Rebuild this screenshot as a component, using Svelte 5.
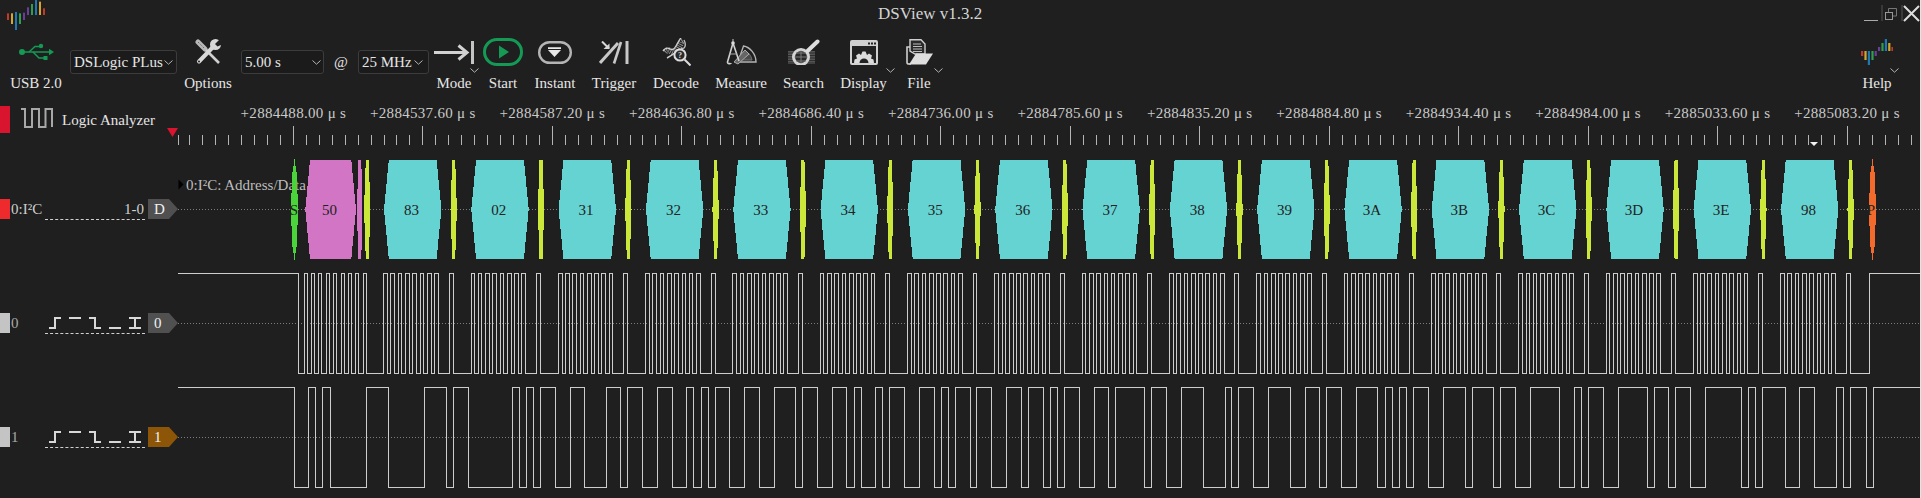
<script>
  const X0 = 178;
  const T = 7.276;
  const BYTE = 87.31;
  const R0 = 383.7;
  const bytes = [0x83,0x02,0x31,0x32,0x33,0x34,0x35,0x36,0x37,0x38,0x39,0x3a,0x3b,0x3c,0x3d,0x3e,0x98];

  function buildWaves() {
    const scl = [];
    const sda = [294];
    let level = 0;
    const setSda = (x, v) => { if (v !== level) { sda.push(x); level = v; } };
    scl.push(298);
    const addrBits = [0,1,0,1,0,0,0,0,0];
    addrBits.forEach((b, i) => {
      const rise = Math.floor(304.2 + i * 7.36);
      const fall = Math.floor(rise + 3.9);
      scl.push(rise, fall);
      if (i < 8 && addrBits[i + 1] !== b) setSda(fall + 1, addrBits[i + 1]);
      if (i === 8) setSda(fall, 1);
    });
    bytes.forEach((val, k) => {
      const R = R0 + k * BYTE;
      const bits = [];
      for (let j = 7; j >= 0; j--) bits.push((val >> j) & 1);
      if (bits[0] === 0) setSda(Math.floor(R - 3), 0);
      let lastFall = 0;
      bits.forEach((b, j) => {
        const rise = Math.floor(R + j * T);
        const fall = Math.floor(R + j * T + 3.7);
        scl.push(rise, fall);
        lastFall = fall;
        if (j < 7 && bits[j + 1] !== b) setSda(fall + 1, bits[j + 1]);
      });
      const r9 = Math.floor(R + 9 * T);
      const f9 = Math.floor(R + 9 * T + 3.9);
      if (level === 0) setSda(lastFall + 1, 1);
      setSda(r9 - 3, 0);
      scl.push(r9, f9);
      setSda(f9, 1);
    });
    setSda(1866, 0);
    scl.push(1869);
    setSda(1873, 1);
    return { scl, sda };
  }

  function wavePath(edges, hi, lo) {
    let y = hi;
    let d = `M0 ${hi}`;
    for (const e of edges) {
      const x = e - X0 + 0.5;
      y = y === hi ? lo : hi;
      d += ` H${x} V${y}`;
    }
    return d + ` H1742`;
  }

  const { scl, sda } = buildWaves();
  const HI = 7.5, LO = 107.5;
  const sclPath = wavePath(scl, HI, LO);
  const sdaPath = wavePath(sda, HI, LO);

  const TOP = 8, BOT = 107, MID = 57.5;
  const hex = (l, r, d) => `${l + d},${TOP} ${r - d},${TOP} ${r},${MID} ${r - d},${BOT} ${l + d},${BOT} ${l},${MID}`;
  const lens = (c, w) => `${c},${TOP - 1} ${c + w * 0.75},${TOP + 16} ${c + w},${MID} ${c + w * 0.75},${BOT - 16} ${c},${BOT + 1} ${c - w * 0.75},${BOT - 16} ${c - w},${MID} ${c - w * 0.75},${TOP + 16}`;

  const acks = [hex(364 - X0, 370.5 - X0, 1.8)];
  const blocks = bytes.map((v, k) => {
    const cx = R0 + k * BYTE + 29 - X0;
    acks.push(hex(cx + 37.8, cx + 44.2, 1.7));
    return {
      label: v.toString(16).toUpperCase().padStart(2, '0'),
      points: hex(cx - 28.7, cx + 28.7, 4.8),
      tx: cx - 1.2
    };
  });

  const labels = ['2884488.00','2884537.60','2884587.20','2884636.80','2884686.40','2884736.00','2884785.60','2884835.20','2884884.80','2884934.40','2884984.00','2885033.60','2885083.20'];
  const RX = 160;
  const majors = labels.map((t, i) => ({ t: `+${t} μ s`, x: 293.4 + i * 129.47 - RX }));
  const tickList = [{ x: 178.5 - RX, major: false }];
  for (let n = -8; n <= 125; n++) {
    const x = Math.floor(293.4 + n * 12.947) + 0.5 - RX;
    if (x + RX < 1920) tickList.push({ x, major: n % 10 === 0 });
  }

  const logoBars = [
    [0,40,60,'#c0392b'],[4,40,72,'#d4a72c'],[8,36,90,'#1f78b4'],[12,40,72,'#2e9e4f'],[16,38,60,'#6a3d9a'],
    [20,22,45,'#6a3d9a'],[24,12,45,'#2e9e4f'],[28,0,45,'#1f78b4'],[32,5,45,'#d4a72c'],[36,25,45,'#c0392b']
  ];
  const helpBars = [
    [0,12,17,'#c0392b'],[3.4,12,21,'#d4a72c'],[6.8,12,26,'#1f78b4'],[10.4,12,21,'#2e9e4f'],[13.6,12,17,'#6a3d9a'],
    [17,8,12,'#6a3d9a'],[20.4,4,12,'#2e9e4f'],[23.8,0,12,'#1f78b4'],[27.2,4,12,'#d4a72c'],[30.4,8,12,'#c0392b']
  ];
</script>

{#snippet chev()}
  <svg class="chev" width="9" height="5" viewBox="0 0 9 5"><path d="M0.5 0.5 L4.5 4.2 L8.5 0.5" fill="none" stroke="#b5b5b5"/></svg>
{/snippet}

{#snippet trig()}
  <div class="trigs">
    <svg width="12" height="12" viewBox="0 0 12 12"><path d="M0 11H6V1H12" class="tg"/></svg>
    <svg width="12" height="12" viewBox="0 0 12 12"><path d="M0 1H12" class="tg"/></svg>
    <svg width="12" height="12" viewBox="0 0 12 12"><path d="M0 1H6V11H12" class="tg"/></svg>
    <svg width="12" height="12" viewBox="0 0 12 12"><path d="M0 11H12" class="tg"/></svg>
    <svg width="12" height="12" viewBox="0 0 12 12"><path d="M0 1H12M0 11H12M6 1V11" class="tg"/></svg>
  </div>
{/snippet}

<div class="app">
  <header class="titlebar">
    <svg class="logo" width="40" height="30" viewBox="0 0 40 30">
      {#each logoBars as b}
        <rect x={b[0]} y={b[1] / 3} width="2" height={(b[2] - b[1]) / 3} fill={b[3]} />
      {/each}
    </svg>
    <div class="title">DSView v1.3.2</div>
    <svg class="winctl" width="56" height="24" viewBox="0 0 56 24">
      <path d="M0 17.5H14" stroke="#aaa" fill="none"/>
      <path d="M18 2V18M38 2V18" stroke="#555" fill="none"/>
      <rect x="21.5" y="9.5" width="7" height="7" fill="#202020" stroke="#999"/>
      <path d="M24.5 9V5.5H32.5V13H29" stroke="#777" fill="none"/>
      <path d="M40 3L55 18M55 3L40 18" stroke="#ddd" stroke-width="2" fill="none"/>
    </svg>
  </header>

  <div class="toolbar">
    <div class="tool usb">
      <div class="icon">
        <svg width="36" height="18" viewBox="0 0 36 18">
          <g fill="#149a55" stroke="#149a55">
            <circle cx="4" cy="9" r="3" stroke="none"/>
            <path d="M4 9H32" fill="none" stroke-width="1.5"/>
            <path d="M31 5.8L36 9L31 12.2Z" stroke="none"/>
            <path d="M11 9L17 3.5H22M15 9L21 15H26" fill="none" stroke-width="1.5"/>
            <circle cx="23" cy="3" r="2.2" stroke="none"/>
            <rect x="25.5" y="13" width="4" height="4" stroke="none"/>
          </g>
        </svg>
      </div>
      <span class="lbl">USB 2.0</span>
    </div>
    <div class="combo device"><span>DSLogic PLus</span>{@render chev()}</div>
    <div class="tool options">
      <div class="icon">
        <svg width="27" height="26" viewBox="0 0 27 26">
          <path d="M3 3L10 10" stroke="#b8b8b8" stroke-width="5" fill="none" stroke-linecap="round"/>
          <path d="M3 3L10 10" stroke="#555" stroke-width="1" stroke-dasharray="1 1.5" fill="none"/>
          <path d="M11 11L24 24" stroke="#cfcfcf" stroke-width="2.6" fill="none"/>
          <path d="M4 22.5L18 8" stroke="#d8d8d8" stroke-width="4" fill="none" stroke-linecap="round"/>
          <circle cx="20.5" cy="5.5" r="5.5" fill="#d8d8d8"/>
          <path d="M20 5L25 0H27V5.5L22.5 7.5Z" fill="#202020"/>
          <circle cx="4" cy="22.5" r="1" fill="#202020"/>
        </svg>
      </div>
      <span class="lbl">Options</span>
    </div>
    <div class="combo dur"><span>5.00 s</span>{@render chev()}</div>
    <div class="at">@</div>
    <div class="combo rate"><span>25 MHz</span>{@render chev()}</div>

    <div class="tool mode">
      <div class="icon">
        <svg width="41" height="23" viewBox="0 0 41 23">
          <path d="M0 11.5H33M24.5 4.5L33 11.5L24.5 18.5" stroke="#d2d2d2" stroke-width="3" fill="none"/>
          <path d="M38.5 0V23" stroke="#c4c4c4" stroke-width="3" fill="none"/>
        </svg>
      </div>
      <span class="lbl">Mode</span>{@render chev()}
    </div>
    <div class="tool start">
      <div class="icon">
        <svg width="40" height="28" viewBox="0 0 40 28">
          <rect x="1.5" y="1.5" width="37" height="25" rx="12.5" fill="none" stroke="#149a55" stroke-width="3"/>
          <path d="M16 7.5L26 14L16 20.5Z" fill="#149a55"/>
        </svg>
      </div>
      <span class="lbl">Start</span>
    </div>
    <div class="tool instant">
      <div class="icon">
        <svg width="34" height="23" viewBox="0 0 34 23">
          <rect x="1.2" y="1.2" width="31.6" height="20.6" rx="10.3" fill="none" stroke="#b4b4b4" stroke-width="2.4"/>
          <path d="M10 6.2H23V8H10ZM10 9L23 9L16.5 16Z" fill="#e8e8e8"/>
        </svg>
      </div>
      <span class="lbl">Instant</span>
    </div>
    <div class="tool trigger">
      <div class="icon">
        <svg width="30" height="23" viewBox="0 0 30 23">
          <path d="M1 22L19 2" stroke="#c8c8c8" stroke-width="3" fill="none"/>
          <path d="M15 22.5L22 1" stroke="#c8c8c8" stroke-width="2.6" fill="none"/>
          <path d="M28 0V23" stroke="#c8c8c8" stroke-width="3" fill="none"/>
          <path d="M3 0.5L10 7.5" stroke="#d8d8d8" stroke-width="2" fill="none"/>
          <path d="M10.5 2.5V8H4.5Z" fill="#d8d8d8"/>
        </svg>
      </div>
      <span class="lbl">Trigger</span>
    </div>
    <div class="tool decode">
      <div class="icon">
        <svg width="29" height="28" viewBox="0 0 29 28">
          <path d="M3 14C8 8 11 20 16 11S18 5 21 3" stroke="#8e8e8e" stroke-width="6" stroke-dasharray="1 1" fill="none"/>
          <path d="M1 13C7 5 9 17 14 8S18 1 19 0M5 20C11 17 14 14 17 11" stroke="#cfcfcf" stroke-width="1.4" fill="none"/>
          <path d="M22 2C25 8 22 12 19 10" stroke="#bbb" stroke-width="1.4" fill="none"/>
          <circle cx="18" cy="17" r="5.6" fill="#2a2a2a" stroke="#dcdcdc" stroke-width="2"/>
          <path d="M22.5 21.5L28.5 27.5" stroke="#dcdcdc" stroke-width="2" fill="none"/>
          <text x="18" y="20" class="q">?</text>
        </svg>
      </div>
      <span class="lbl">Decode</span>
    </div>
    <div class="tool measure">
      <div class="icon">
        <svg width="31" height="26" viewBox="0 0 31 26">
          <path d="M12 23L30 23C30 15 24 8 17.5 7Z" fill="none" stroke="#b4b4b4" stroke-width="1.4"/>
          <path d="M15 21L26 21C25 16 22 13 19 12Z" fill="#4a4a4a" stroke="#777"/>
          <path d="M8 23L19 11L23 15L12 25Z" fill="#666" stroke="#aaa"/>
          <path d="M7 4L1.5 23C1 25 5 25 5 24M7 4L13 22" stroke="#d0d0d0" stroke-width="1.6" fill="none"/>
          <path d="M3.5 15H11" stroke="#aaa" fill="none"/>
          <circle cx="7" cy="4" r="1.8" fill="#ddd"/>
          <path d="M7 0V3" stroke="#ccc" fill="none"/>
        </svg>
      </div>
      <span class="lbl">Measure</span>
    </div>
    <div class="tool search">
      <div class="icon">
        <svg width="32" height="26" viewBox="0 0 32 26">
          <rect x="0" y="12" width="27" height="13" fill="#555"/>
          <path d="M0 14H27M0 16.5H27M0 19H27M0 21.5H27M0 24H27" stroke="#2e2e2e" fill="none"/>
          <circle cx="13" cy="18" r="7.5" fill="#2a2a2a" stroke="#d4d4d4" stroke-width="3"/>
          <path d="M6.5 18H19.5M13 11.5V24.5M8 14H18M8 22H18" stroke="#7a7a7a" fill="none"/>
          <path d="M19.5 12L29.5 2.5" stroke="#dedede" stroke-width="4" stroke-linecap="round" fill="none"/>
        </svg>
      </div>
      <span class="lbl">Search</span>
    </div>
    <div class="tool display">
      <div class="icon">
        <svg width="28" height="25" viewBox="0 0 28 25">
          <rect x="1" y="1" width="26" height="23" rx="1" fill="#222" stroke="#d0d0d0" stroke-width="2"/>
          <rect x="1" y="1" width="26" height="5" fill="#d0d0d0"/>
          <path d="M18 2.5h2v2h-2zM21 2.5h2v2h-2zM24 2.5h2v2h-2z" fill="#222"/>
          <path d="M4 23L4.5 19.5L7 18.5L6 15.5L9 13.5L11 15L12.5 11.5H15.5L17 15L19 13.5L22 15.5L21 18.5L23.5 19.5L24 23H18.5A4.5 4.5 0 0 0 9.500 23Z" fill="#dcdcdc"/>
        </svg>
      </div>
      <span class="lbl">Display</span>{@render chev()}
    </div>
    <div class="tool file">
      <div class="icon">
        <svg width="27" height="26" viewBox="0 0 27 26">
          <path d="M4 12V0.800H15L19 5V15H9Z" fill="#2a2a2a" stroke="#cfcfcf" stroke-width="1.4"/>
          <path d="M7 5H15M7 7.500H16M7 10H16M7 12.500H16" stroke="#bdbdbd" fill="none"/>
          <path d="M4 8H1V23.500C1 24.500 2 25 3 25H5" stroke="#cfcfcf" stroke-width="1.6" fill="none"/>
          <path d="M10 14.500H27L20 25.500H3Z" fill="#dedede"/>
        </svg>
      </div>
      <span class="lbl">File</span>{@render chev()}
    </div>

    <div class="tool help">
      <div class="icon">
        <svg width="32" height="26" viewBox="0 0 32 26">
          {#each helpBars as b}
            <rect x={b[0]} y={b[1]} width="2.2" height={b[2] - b[1]} fill={b[3]} />
          {/each}
        </svg>
      </div>
      <span class="lbl">Help</span>{@render chev()}
    </div>
  </div>

  <div class="rulerrow">
    <div class="la">
      <div class="swatch red"></div>
      <svg class="laicon" width="33" height="20" viewBox="0 0 33 20">
        <path d="M1 1H5V19H12V1H19V19H25.500V1H32V19" fill="none" stroke="#a8a8a8" stroke-width="2"/>
      </svg>
      <span class="la-text">Logic Analyzer</span>
    </div>
    <svg class="ruler" width="1760" height="52" viewBox="0 0 1760 52">
      {#each majors as m}
        <text x={m.x} y="18" class="rlabel">{m.t}</text>
      {/each}
      {#each tickList as t}
        <path d="M{t.x} {t.major ? 26 : 35}V45" class="tick"/>
      {/each}
      <path d="M7 28H18L12.500 37Z" fill="#d8142e"/>
      <path d="M1650 42H1658L1654 46Z" fill="#f2f2f2"/>
    </svg>
  </div>

  <div class="row">
    <div class="thead">
      <div class="swatch bright"></div>
      <span class="name">0:I²C</span>
      <div class="ctrl right"><span>1-0</span></div>
      <div class="tag"><span>D</span></div>
    </div>
    <svg class="canvas" width="1742" height="114" viewBox="0 0 1742 114">
      <path d="M0 57.500H1742" class="mid"/>
      <text x="8" y="38" class="ann">0:I²C: Address/Data</text>
      <path d="M0.500 27.500L5.500 32.500L0.500 37.500Z" fill="#000"/>
      <g class="crisp">
        <polygon points={lens(116.5, 3.4)} fill="#4bd33b"/>
        <polygon points={hex(305.3 - X0, 356 - X0, 4.7)} fill="#d175c4"/>
        <polygon points={hex(357 - X0, 362.5 - X0, 1.2)} fill="#d175c4"/>
        {#each blocks as b}
          <polygon points={b.points} fill="#66d3d3"/>
        {/each}
        {#each acks as a}
          <polygon points={a} fill="#cbe83a"/>
        {/each}
        <polygon points={lens(1872.5 - X0, 3.4)} fill="#f26a2c"/>
      </g>
      <text x="116" y="62.500" class="dt">S</text>
      <text x="151.500" y="62.500" class="dt">50</text>
      {#each blocks as b}
        <text x={b.tx} y="62.500" class="dt">{b.label}</text>
      {/each}
      <text x={1871 - X0} y="62.500" class="dt">P</text>
    </svg>
  </div>

  <div class="row">
    <div class="thead">
      <div class="swatch grey"></div>
      <span class="name dim">0</span>
      <div class="ctrl">{@render trig()}</div>
      <div class="tag"><span>0</span></div>
    </div>
    <svg class="canvas" width="1742" height="114" viewBox="0 0 1742 114">
      <path d="M0 57.500H1742" class="mid"/>
      <path d={sclPath} class="wave"/>
    </svg>
  </div>

  <div class="row">
    <div class="thead">
      <div class="swatch grey"></div>
      <span class="name dim">1</span>
      <div class="ctrl">{@render trig()}</div>
      <div class="tag brown"><span>1</span></div>
    </div>
    <svg class="canvas" width="1742" height="114" viewBox="0 0 1742 114">
      <path d="M0 57.500H1742" class="mid"/>
      <path d={sdaPath} class="wave"/>
    </svg>
  </div>
</div>

<style>
  :global(body) { margin: 0; background: #1f1f1f; }
  .app {
    width: 1920px;
    height: 498px;
    border-right: 1px solid #e4e4e4;
    background: #1f1f1f;
    color: #e6e6e6;
    font: 15px/18px "Liberation Serif", serif;
    overflow: hidden;
  }
  svg { display: block; flex: none; }

  .titlebar { height: 30px; display: flex; padding-left: 7px; }
  .title { margin-left: 831px; font-size: 17px; line-height: 27px; color: #d4d4d4; }
  .winctl { margin-left: auto; margin-top: 3px; }

  .toolbar { height: 70px; display: flex; padding-right: 21px; }
  .tool {
    position: relative;
    height: 62px;
    flex: none;
    display: flex;
    flex-direction: column;
    align-items: center;
  }
  .icon { height: 44px; display: flex; align-items: center; justify-content: center; }
  .lbl { white-space: nowrap; }
  .tool > :global(.chev) { position: absolute; right: 0; top: 38px; }

  .usb { width: 70px; padding-left: 2px; box-sizing: border-box; }
  .options { width: 62px; }
  .mode { width: 50px; }
  .start { width: 48px; }
  .instant { width: 56px; }
  .trigger { width: 62px; }
  .decode { width: 62px; }
  .measure { width: 68px; }
  .search { width: 57px; }
  .display { width: 63px; }
  .file { width: 48px; }
  .help { width: 44px; margin-left: auto; }

  .combo {
    box-sizing: border-box;
    height: 24px;
    margin-top: 20px;
    flex: none;
    display: flex;
    align-items: center;
    justify-content: space-between;
    padding: 0 3px;
    border: 1px solid #3c3c3c;
    border-radius: 3px;
    background: #1b1b1b;
    white-space: nowrap;
  }
  .device { width: 107px; }
  .dur { width: 83px; margin-left: 2px; padding-right: 0; }
  .dur :global(.chev), .rate :global(.chev) { margin-right: 2px; }
  .rate { width: 71px; }
  .at { width: 34px; margin-top: 20px; line-height: 24px; text-align: center; flex: none; }

  .rulerrow { height: 52px; display: flex; }
  .la { width: 160px; flex: none; display: flex; align-items: flex-start; padding-top: 6px; box-sizing: border-box; }
  .laicon { margin: 2px 0 0 10px; }
  .la-text { margin-left: 9px; line-height: 28px; white-space: nowrap; }
  .swatch { width: 10px; flex: none; height: 20px; }
  .la .swatch { height: 27px; }
  .red { background: #d8142e; }
  .bright { background: #ee2a2c; }
  .grey { background: #c4c4c4; }
  .rlabel { font-size: 15px; letter-spacing: 0.3px; fill: #cacaca; text-anchor: middle; }
  .tick { stroke: #b4b4b4; fill: none; }

  .row { height: 114px; display: flex; }
  .thead { width: 178px; flex: none; display: flex; align-items: center; }
  .name { width: 35px; flex: none; padding-left: 1px; box-sizing: border-box; white-space: nowrap; color: #cfcfcf; }
  .name.dim { color: #aaa; }
  .ctrl {
    box-sizing: border-box;
    width: 100px;
    height: 21px;
    margin-top: 1px;
    flex: none;
    border-bottom: 1px dashed #d0d0d0;
    display: flex;
    align-items: center;
    color: #cfcfcf;
  }
  .ctrl.right { justify-content: flex-end; padding-right: 1px; }
  .trigs { display: flex; gap: 8px; padding-left: 4px; }
  .tg { fill: none; stroke: #d8d8d8; stroke-width: 2; }
  .tag {
    width: 30px;
    height: 20px;
    margin-left: 3px;
    flex: none;
    background: #505050;
    clip-path: polygon(0 0, 21px 0, 100% 50%, 21px 100%, 0 100%);
    color: #f0f0f0;
    line-height: 20px;
    box-sizing: border-box;
    padding-left: 6px;
  }
  .tag.brown { background: #8c5508; }

  .mid { stroke: #7c7c7c; stroke-dasharray: 1 2; fill: none; }
  .wave { fill: none; stroke: #cdcdcd; stroke-width: 1; shape-rendering: crispEdges; }
  .crisp { shape-rendering: crispEdges; }
  .ann { font-size: 15px; fill: #bdbdbd; }
  .dt { font-size: 15px; fill: #222; text-anchor: middle; }
  .q { font-size: 8px; font-weight: bold; fill: #ddd; text-anchor: middle; }
</style>
